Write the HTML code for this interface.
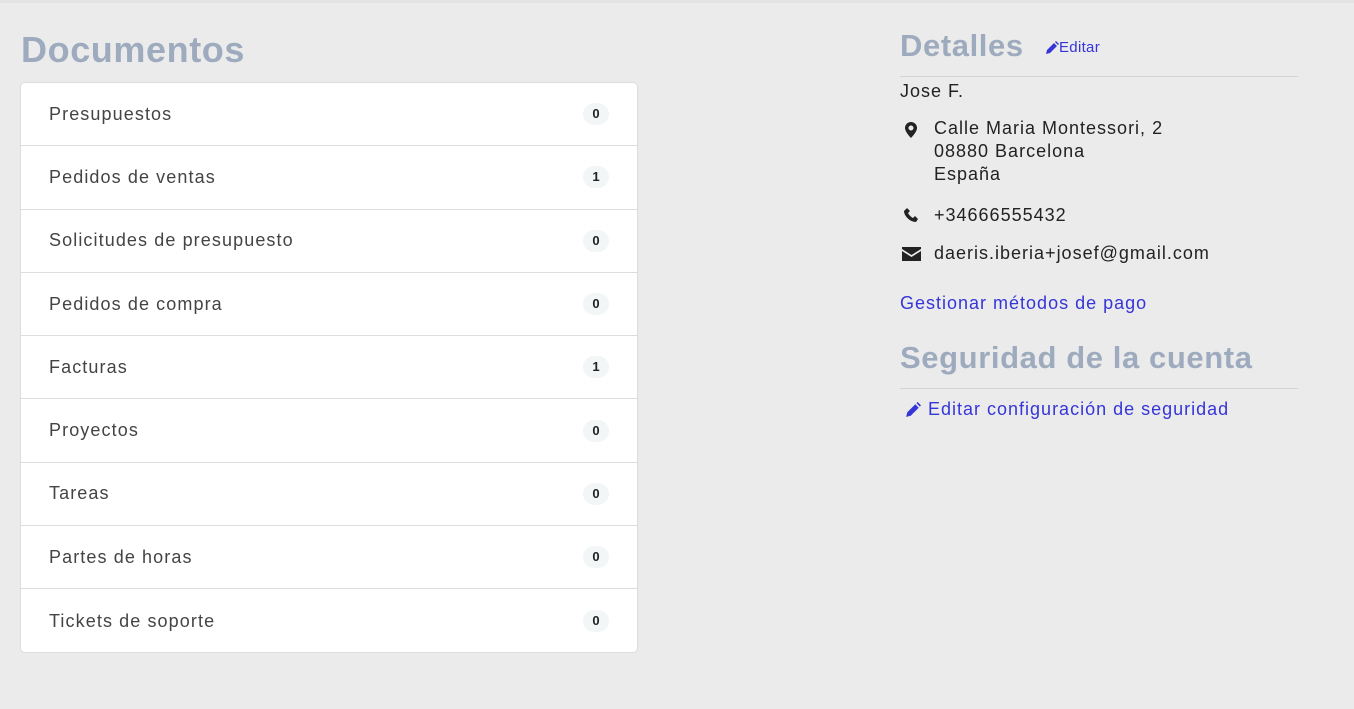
<!DOCTYPE html>
<html><head><meta charset="utf-8"><style>
body{margin:0;background:#ebebeb;font-family:"Liberation Sans",sans-serif;width:1354px;height:709px;position:relative;overflow:hidden;color:#212529}
.top{position:absolute;left:0;top:0;width:1354px;height:3px;background:#e4e4e4}
h1{position:absolute;margin:0;font-weight:bold;color:#9eabbe;letter-spacing:0.6px}
.card{position:absolute;left:20px;top:82px;width:616px;height:569px;background:#fff;border:1px solid #dcdcdc;border-radius:5px;overflow:hidden}
.row{height:63.3px;border-bottom:1px solid #dedede;box-sizing:border-box;display:flex;align-items:center;justify-content:space-between;padding:0 28px;font-size:18px;color:#444;letter-spacing:1.1px}
.row:last-child{border-bottom:none}
.b{min-width:10px;height:22px;line-height:22px;border-radius:11px;background:#f3f6f7;font-size:13px;font-weight:bold;color:#222;text-align:center;padding:0 8px;letter-spacing:0}
.r{position:absolute;left:900px;font-size:18px;color:#222;letter-spacing:1px}
.hr{position:absolute;left:900px;width:398px;height:1px;background:#d4d4d4}
.link{color:#3535d8}
svg{position:absolute}
</style></head><body>
<div class="top"></div>
<h1 style="left:21px;top:29px;font-size:36px">Documentos</h1>
<div class="card">
<div class="row"><span>Presupuestos</span><span class="b">0</span></div>
<div class="row"><span>Pedidos de ventas</span><span class="b">1</span></div>
<div class="row"><span>Solicitudes de presupuesto</span><span class="b">0</span></div>
<div class="row"><span>Pedidos de compra</span><span class="b">0</span></div>
<div class="row"><span>Facturas</span><span class="b">1</span></div>
<div class="row"><span>Proyectos</span><span class="b">0</span></div>
<div class="row"><span>Tareas</span><span class="b">0</span></div>
<div class="row"><span>Partes de horas</span><span class="b">0</span></div>
<div class="row"><span>Tickets de soporte</span><span class="b">0</span></div>
</div>
<h1 style="left:900px;top:28px;font-size:31px">Detalles</h1>
<svg style="left:1045px;top:41px" width="14" height="14" viewBox="0 0 14 14"><path d="M1 13l1-4 7-7 3 3-7 7z M10 1l3 3 1-1-3-3z" fill="#3535d8"/></svg>
<div class="r link" style="left:1059px;top:39px;font-size:15px;letter-spacing:0.3px">Editar</div>
<div class="hr" style="top:76px"></div>
<div class="r" style="top:81px">Jose F.</div>
<svg style="left:905px;top:122px" width="12" height="16" viewBox="0 0 12 16"><path d="M6 0a6 6 0 0 0-6 6c0 4 6 10 6 10s6-6 6-10a6 6 0 0 0-6-6zm0 8.5a2.5 2.5 0 1 1 0-5 2.5 2.5 0 0 1 0 5z" fill="#222"/></svg>
<div class="r" style="left:934px;top:117px;line-height:23px">Calle Maria Montessori, 2<br>08880 Barcelona<br>España</div>
<svg style="left:904px;top:208px" width="14" height="14" viewBox="0 0 14 14"><path d="M3 0l3 3-2 2c1 2 3 4 5 5l2-2 3 3-2 3C6 14 0 8 0 3z" fill="#222"/></svg>
<div class="r" style="left:934px;top:205px">+34666555432</div>
<svg style="left:902px;top:247px" width="19" height="14" viewBox="0 0 19 14"><path d="M0 0h19v2l-9.5 6L0 2z M0 4l9.5 6L19 4v10H0z" fill="#222"/></svg>
<div class="r" style="left:934px;top:243px">daeris.iberia+josef@gmail.com</div>
<div class="r link" style="top:293px">Gestionar métodos de pago</div>
<h1 style="left:900px;top:340px;font-size:31px">Seguridad de la cuenta</h1>
<div class="hr" style="top:388px"></div>
<svg style="left:905px;top:402px" width="16" height="16" viewBox="0 0 14 14"><path d="M1 13l1-4 7-7 3 3-7 7z M10 1l3 3 1-1-3-3z" fill="#3535d8"/></svg>
<div class="r link" style="left:928px;top:399px">Editar configuración de seguridad</div>
</body></html>
